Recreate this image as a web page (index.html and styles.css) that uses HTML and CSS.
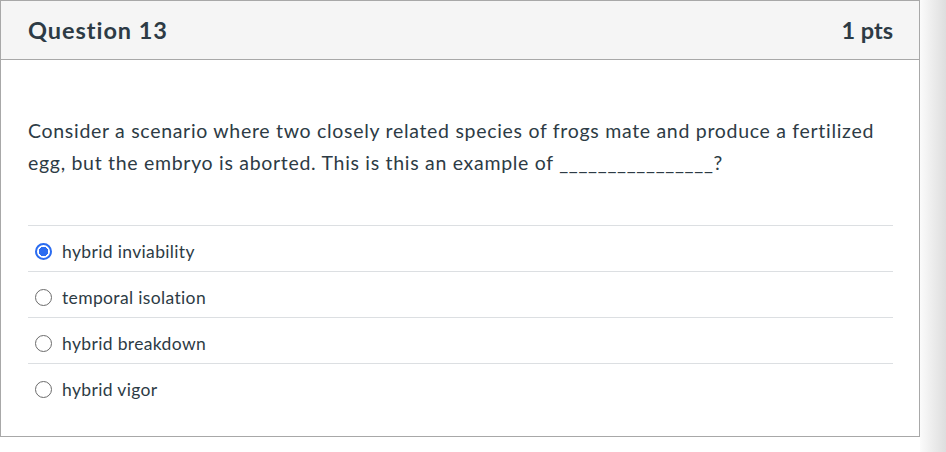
FILE: index.html
```html
<!DOCTYPE html>
<html>
<head>
<meta charset="utf-8">
<link rel="stylesheet" href="styles.css">
</head>
<body>
<div class="page">
  <div class="card">
    <div class="header">
      <h2 class="title">Question 13</h2>
      <span class="pts">1 pts</span>
    </div>
    <div class="content">
      <p class="question">Consider a scenario where two closely related species of frogs mate and produce a fertilized egg, but the embryo is aborted. This is this an example of ________________?</p>
      <div class="answers">
        <label class="answer"><span class="radio checked"></span><span class="label">hybrid inviability</span></label>
        <label class="answer"><span class="radio"></span><span class="label">temporal isolation</span></label>
        <label class="answer"><span class="radio"></span><span class="label">hybrid breakdown</span></label>
        <label class="answer"><span class="radio"></span><span class="label">hybrid vigor</span></label>
      </div>
    </div>
  </div>
  <div class="edge"></div>
</div>
</body>
</html>
```
FILE: styles.css
```css
html, body {
  margin: 0;
  padding: 0;
  background: #ffffff;
}
body {
  font-family: Lato, "Noto Sans", sans-serif;
  color: #2d3b45;
  width: 946px;
  height: 452px;
  overflow: hidden;
}
.page {
  display: flex;
  height: 452px;
}
.card {
  width: 918px;
  height: 435px;
  border: 1px solid #a8a8a8;
  box-sizing: content-box;
  background: #fff;
}
.edge {
  flex: 1;
  background: linear-gradient(to right, #fbfbfb 0%, #ececec 50%, #dedede 100%);
}
.header {
  height: 58px;
  background: #f5f5f5;
  border-bottom: 1px solid #a8a8a8;
  display: flex;
  align-items: center;
  justify-content: space-between;
  padding: 0 26px 0 27px;
}
.title {
  margin: 0;
  font-size: 23.5px;
  letter-spacing: 0.95px;
  font-weight: 700;
  color: #2d3b45;
}
.pts {
  font-size: 23.5px;
  font-weight: 700;
  color: #2d3b45;
}
.content {
  padding: 55px 26px 0 27px;
}
.question {
  margin: 0 0 46px 0;
  font-size: 19.5px;
  letter-spacing: 0.7px;
  line-height: 32px;
}
.answers {
  border-top: 1px solid #dcdfe2;
}
.answer {
  display: flex;
  align-items: center;
  height: 39px;
  padding-top: 6px;
  border-bottom: 1px solid #dcdfe2;
  padding-left: 7px;
  font-size: 17.5px;
  letter-spacing: 0.35px;
}
.answer:last-child {
  border-bottom: none;
}
.radio {
  width: 15px;
  height: 15px;
  border: 1px solid #6b6b6b;
  border-radius: 50%;
  box-sizing: content-box;
  margin-right: 10px;
  flex: none;
}
.radio.checked {
  border: 2px solid #2b6cf0;
  width: 13px;
  height: 13px;
  background: radial-gradient(circle, #2b6cf0 0 4.5px, #fff 5px);
}
```
